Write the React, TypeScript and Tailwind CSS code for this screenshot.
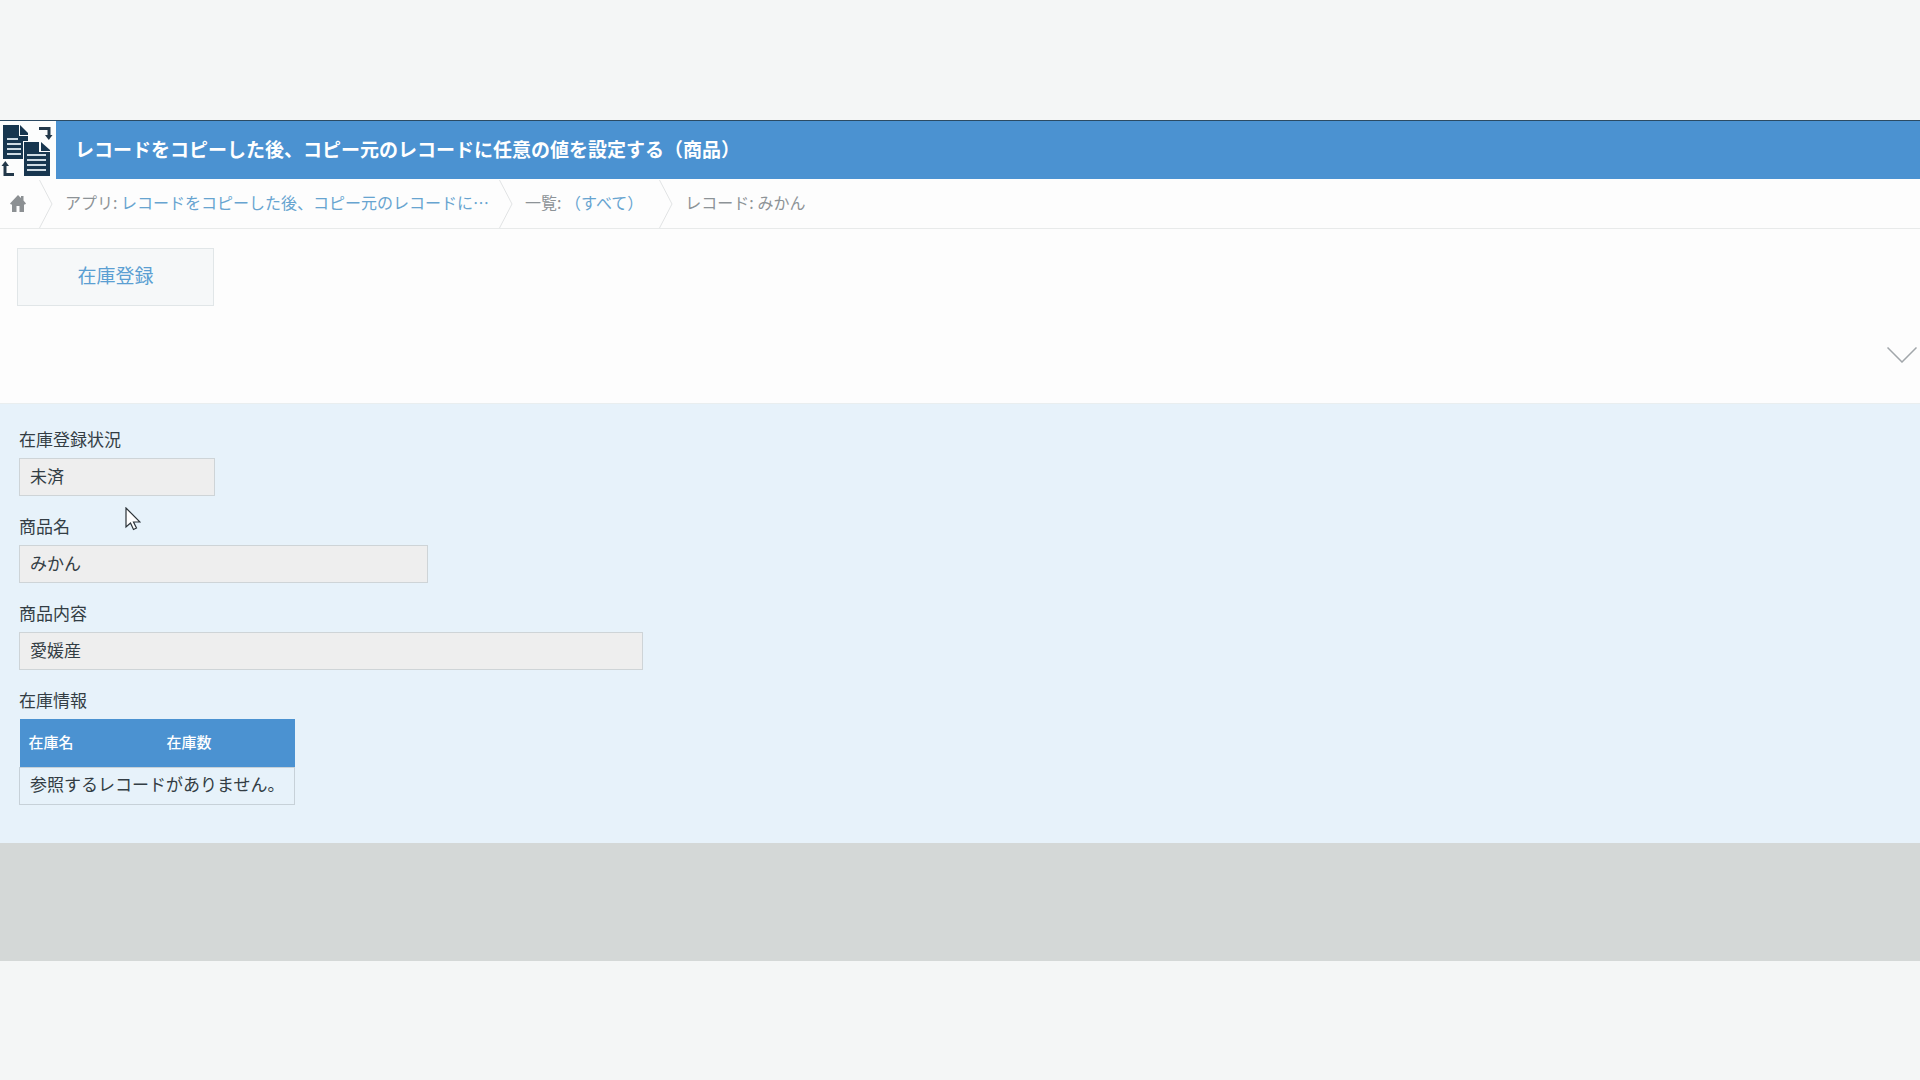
import React from "react";

const fields = [
  { id: "status", label: "在庫登録状況", value: "未済", width: "w-[196px]" },
  { id: "name", label: "商品名", value: "みかん", width: "w-[409px]" },
  { id: "detail", label: "商品内容", value: "愛媛産", width: "w-[624px]" },
];

const AppIcon: React.FC = () => (
  <svg viewBox="0 0 56 58" className="w-14 h-[58px] shrink-0 bg-[#fcfdfd]" aria-hidden="true">
    <g fill="#17364f">
      <path d="M3 4h16v11h9v5h-5v18H3z" />
      <path d="M20 4l8 8v2h-8z" />
      <path d="M24 21h15v10h11v24H24z" />
      <path d="M41 21l9 8v1h-9z" />
    </g>
    <g stroke="#cfdbe3" strokeWidth="2">
      <path d="M7 18h11M7 23h14M7 28h14M7 33h14" />
      <path d="M27 34h19M27 39h19M27 44h19M27 49h19" />
    </g>
    <g fill="none" stroke="#22384a" strokeWidth="3">
      <path d="M39 7.500h10v8" />
      <path d="M14 53.500H5V44" />
    </g>
    <g fill="#22384a">
      <path d="M45 14h7.500l-3.700 5z" />
      <path d="M1.500 45H9l-3.700-5z" />
    </g>
  </svg>
);

const Separator: React.FC = () => (
  <svg viewBox="0 0 14 48" className="w-3.5 h-12 shrink-0" fill="none" stroke="#e1e3e4" aria-hidden="true">
    <path d="M.5 0l12.500 24L.5 48" />
  </svg>
);

const App: React.FC = () => {
  return (
    <div className="relative min-h-screen py-[120px] bg-[#f4f6f6] text-[#333d44] font-['Noto_Sans_CJK_JP',sans-serif]">
      {/* App title */}
      <header className="flex items-center border-t border-[#2b4a63] bg-[#4b92d1]">
        <AppIcon />
        <h1 className="ml-[19px] pb-0.5 text-[19px] leading-7 font-bold text-white whitespace-nowrap">
          レコードをコピーした後、コピー元のレコードに任意の値を設定する（商品）
        </h1>
      </header>

      {/* Breadcrumb */}
      <nav
        aria-label="breadcrumb"
        className="flex items-center h-[50px] border-b border-[#e8eaea] bg-[#fdfdfd] text-base leading-6 text-[#8d9397] whitespace-nowrap"
      >
        <a href="#home" aria-label="ホーム" className="ml-2.5 mr-[13px]">
          <svg viewBox="0 0 16 17" className="w-4 h-[17px]" fill="#8c9093" aria-hidden="true">
            <path d="M8 0l3 3V1h2.500v4.500L16 8.500l-1 1h-1V17H9.500v-6h-3v6H2V9.500H1l-1-1z" />
          </svg>
        </a>
        <Separator />
        <span className="ml-3 mr-2.5 pb-1">
          アプリ:{" "}
          <a href="#app" className="text-[#67a4d0]">
            レコードをコピーした後、コピー元のレコードに…
          </a>
        </span>
        <Separator />
        <span className="ml-3 mr-4 pb-1">
          一覧:{" "}
          <a href="#list" className="text-[#67a4d0]">
            （すべて）
          </a>
        </span>
        <Separator />
        <span className="ml-3 pb-1">レコード: みかん</span>
      </nav>

      {/* Actions */}
      <div className="px-[17px] pt-[19px] pb-[38px] bg-[#fdfdfd] border-b border-[#e9eeef]">
        <button
          type="button"
          className="block w-[197px] h-[58px] pb-1 border border-[#e1e6e8] bg-[#f6f8f9] text-[19px] text-[#5b9fd2]"
        >
          在庫登録
        </button>
        <div className="flex justify-end mt-[39px] -mr-4">
          <button type="button" aria-label="開く" className="p-0.5">
            <svg viewBox="0 0 30 16" className="w-[30px] h-4" fill="none" stroke="#a1a6aa" strokeWidth="1.500" aria-hidden="true">
              <path d="M.5 .5L15 15 29.500 .5" />
            </svg>
          </button>
        </div>
      </div>

      {/* Record */}
      <main className="px-[19px] pt-[22px] pb-[38px] bg-[#e7f2fa] text-[17px]">
        {fields.map((field) => (
          <div key={field.id} className="mb-[17px]">
            <label htmlFor={field.id} className="block mb-1.5 leading-[26px]">
              {field.label}
            </label>
            <input
              id={field.id}
              readOnly
              defaultValue={field.value}
              className={`block h-[38px] px-2.5 pb-1 border border-[#ced4d7] bg-[#eeeeee] outline-none ${field.width}`}
            />
          </div>
        ))}

        <h2 id="stock" className="mb-1.5 leading-[26px]">
          在庫情報
        </h2>
        <table aria-labelledby="stock" className="w-[276px] table-fixed border-collapse">
          <thead>
            <tr className="h-12 bg-[#4b92d1] text-left text-[15px] leading-5 text-white">
              <th className="w-[138px] px-[9px] pb-0.5 font-medium">在庫名</th>
              <th className="px-[9px] pb-0.5 font-medium">在庫数</th>
            </tr>
          </thead>
          <tbody>
            <tr>
              <td colSpan={2} className="h-[37px] px-2.5 pb-1 border border-[#c7d1d8] leading-6 whitespace-nowrap">
                参照するレコードがありません。
              </td>
            </tr>
          </tbody>
        </table>
      </main>

      <div className="h-[118px] bg-[#d4d8d7]" />

      {/* Mouse pointer */}
      <svg viewBox="0 0 16 24" className="absolute left-[125px] top-[507px] w-4 h-6" aria-hidden="true">
        <path
          d="M1 1v19l4.500-4 3 6.500 3-1.500-3-6H15z"
          fill="#fff"
          stroke="#2c3338"
          strokeWidth="1.200"
        />
      </svg>
    </div>
  );
};

export default App;
